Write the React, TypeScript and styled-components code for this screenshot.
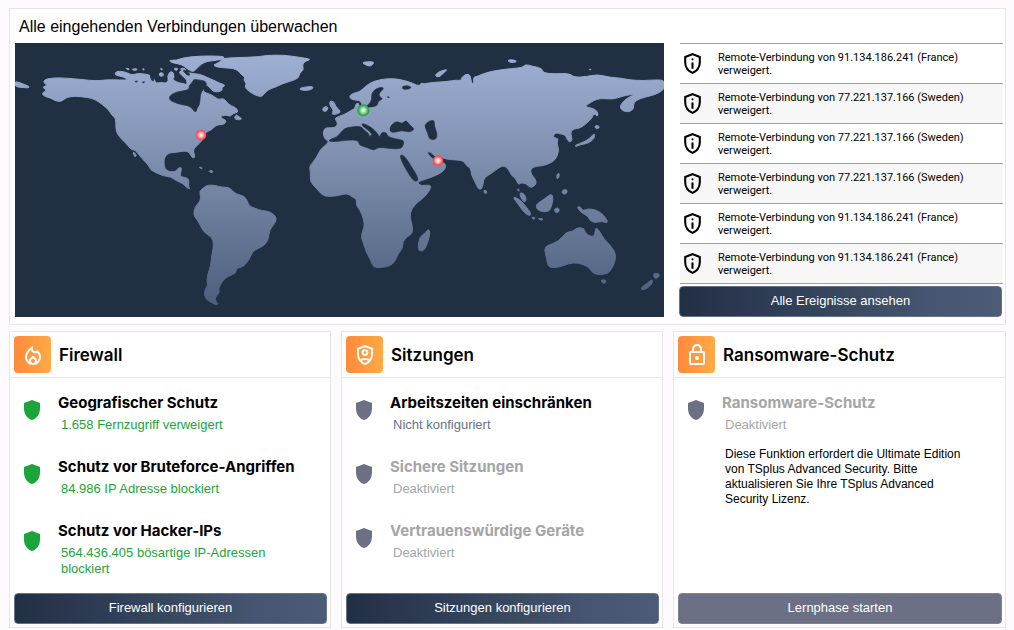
import React from 'react';
import styled, { createGlobalStyle } from 'styled-components';

const GlobalStyle = createGlobalStyle`
  *, *::before, *::after { box-sizing: border-box; }
  body {
    margin: 0;
    background: #fefbff;
    color: #000;
    font-family: "Liberation Sans", Arial, sans-serif;
  }
  h1, h2, h3, p, ul { margin: 0; padding: 0; }
  ul { list-style: none; }
`;

const Page = styled.main`
  display: grid;
  gap: 6px;
  padding: 8px 8px 2px 9px;
`;

const Panel = styled.section`
  background: #fff;
  border: 1px solid #e6e6e8;
`;

const Monitor = styled(Panel)`
  padding: 0 2px 7px 5px;
`;

const MonitorTitle = styled.h1`
  padding: 2px 0 0 4px;
  font-size: 16px;
  font-weight: 400;
  line-height: 32px;
`;

const MonitorBody = styled.div`
  display: grid;
  grid-template-columns: minmax(0, 1fr) 324px;
  align-items: start;
  gap: 15px;
`;

const Map = styled.svg`
  display: block;
  width: 100%;
  background: #212f42;
`;

const EventList = styled.ul`
  margin-left: 1px;
  border-top: 1px solid #a0a0a0;
`;

const EventRow = styled.li`
  display: flex;
  align-items: center;
  height: 40px;
  border-bottom: 1px solid #a0a0a0;
  background: #fff;
  &:nth-child(even) { background: #f7f7f7; }
`;

const EventText = styled.p`
  padding-left: 13px;
  max-width: 270px;
  font-family: Roboto, "Liberation Sans", sans-serif;
  font-size: 11px;
  line-height: 13px;
`;

const ActionButton = styled.button<{ $muted?: boolean }>`
  height: 31px;
  border: 1px solid ${p => (p.$muted ? '#7d8296' : '#66748a')};
  border-radius: 4px;
  background: ${p =>
    p.$muted
      ? '#6b7084'
      : 'linear-gradient(90deg, #203044 0%, #2a354e 14%, #304058 34%, #3c4c62 58%, #455470 76%, #4c5c76 100%)'};
  color: #fff;
  font-family: inherit;
  font-size: 13px;
  line-height: 16px;
  padding: 0 0 2px;
  cursor: pointer;
`;

const EventColumn = styled.div`
  display: flex;
  flex-direction: column;
  ${ActionButton} { margin: 2px 1px 0 0; }
`;

const Cards = styled.div`
  display: grid;
  grid-template-columns: 322fr 322fr 333fr;
  gap: 10px;
`;

const Card = styled(Panel)`
  display: flex;
  flex-direction: column;
  ${ActionButton} { margin: auto 3px 3px 4px; }
`;

const CardHeader = styled.header`
  display: flex;
  align-items: center;
  gap: 8px;
  height: 46px;
  padding-left: 4px;
  border-bottom: 1px solid #e6e6e8;
`;

const Tile = styled.span`
  display: grid;
  place-items: center;
  width: 37px;
  height: 37px;
  border-radius: 4px;
  background: linear-gradient(90deg, #ff8a3c, #ffab45);
  color: #fff;
`;

const CardTitle = styled.h2`
  font-family: Inter, "Liberation Sans", sans-serif;
  font-size: 17px;
  font-weight: 600;
  line-height: 20px;
`;

const FeatureList = styled.ul`
  display: grid;
  gap: 14px;
  padding: 15px 10px 16px;
`;

const Feature = styled.li`
  display: flex;
  align-items: center;
  gap: 14px;
`;

const FeatureIcon = styled.span<{ $active?: boolean }>`
  flex: none;
  padding-bottom: 16px;
  color: ${p => (p.$active ? '#1ba43a' : '#6b7084')};
`;

const FeatureTitle = styled.h3<{ $off?: boolean }>`
  font-family: Inter, "Liberation Sans", sans-serif;
  font-size: 15px;
  font-weight: 700;
  line-height: 20px;
  color: ${p => (p.$off ? '#a5a5a5' : '#000')};
`;

const tones = { green: '#1ba43a', slate: '#6b7084', grey: '#a5a5a5' };
type Tone = keyof typeof tones;

const FeatureStatus = styled.p<{ $tone: Tone }>`
  min-height: 26px;
  margin-top: 4px;
  padding-left: 3px;
  max-width: 240px;
  font-size: 13px;
  line-height: 16px;
  color: ${p => tones[p.$tone]};
`;

const Notice = styled.p`
  max-width: 310px;
  padding: 4px 10px 0 51px;
  margin-top: -16px;
  font-size: 12px;
  line-height: 15px;
`;

const Glyph = styled.svg`
  display: block;
  fill: currentColor;
`;

const icons = {
  shield: 'M480-80q-139-35-229.5-159.5T160-516v-244l320-120 320 120v244q0 152-90.5 276.5T480-80Z',
  info: 'M440-280h80v-240h-80v240Zm40-320q17 0 28.5-11.5T520-640q0-17-11.5-28.5T480-680q-17 0-28.5 11.5T440-640q0 17 11.5 28.5T480-600Zm0 520q-139-35-229.5-159.5T160-516v-244l320-120 320 120v244q0 152-90.5 276.5T480-80Zm0-84q104-33 172-132t68-220v-189l-240-90-240 90v189q0 121 68 220t172 132Z',
  fire: 'M240-400q0 52 21 98.5t60 81.5q-1-5-1-9v-9q0-32 12-60t35-51l113-111 113 111q23 23 35 51t12 60v9q0 4-1 9 39-35 60-81.5t21-98.5q0-50-18.5-94.5T648-574q-20 13-42 19.5t-45 6.5q-62 0-107.5-41T401-690q-39 33-69 68.5t-50.5 72Q261-513 250.5-475T240-400Zm240 52-57 56q-11 11-17 25t-6 29q0 32 23.5 55t56.5 23q33 0 56.5-23t23.5-55q0-16-6-29.5T537-292l-57-56Zm0-492v132q0 34 23.5 57t57.5 23q18 0 33.5-7.5T622-658l18-22q74 42 117 117t43 163q0 134-93 227T480-80q-134 0-227-93t-93-227q0-129 86.5-245T480-840Z',
  person: 'M480-440q58 0 99-41t41-99q0-58-41-99t-99-41q-58 0-99 41t-41 99q0 58 41 99t99 41Zm0-80q-25 0-42.5-17.5T420-580q0-25 17.5-42.5T480-640q25 0 42.5 17.5T540-580q0 25-17.5 42.5T480-520Zm0 440q-139-35-229.5-159.5T160-516v-244l320-120 320 120v244q0 152-90.5 276.5T480-80Zm0-400Zm0-315-240 90v189q0 54 15 105t41 96q42-21 88-33t96-12q50 0 96 12t88 33q26-45 41-96t15-105v-189l-240-90Zm0 515q-36 0-70 8t-65 22q29 30 63 52t72 34q38-12 72-34t63-52q-31-14-65-22t-70-8Z',
  lock: 'M240-80q-33 0-56.5-23.5T160-160v-400q0-33 23.5-56.5T240-640h40v-80q0-83 58.5-141.5T480-920q83 0 141.5 58.5T680-720v80h40q33 0 56.5 23.5T800-560v400q0 33-23.5 56.5T720-80H240Zm0-80h480v-400H240v400Zm240-120q33 0 56.5-23.5T560-360q0-33-23.5-56.5T480-440q-33 0-56.5 23.5T400-360q0 33 23.5 56.5T480-280ZM360-640h240v-80q0-50-35-85t-85-35q-50 0-85 35t-35 85v80Z',
};

function Icon({ name, size = 24 }: { name: keyof typeof icons; size?: number }) {
  return (
    <Glyph width={size} height={size} viewBox="0 -960 960 960" aria-hidden="true">
      <path d={icons[name]} />
    </Glyph>
  );
}

const land = [
  // North America
  '125,262 144,256 130,248 134,239 150,235 180,233 240,238 290,243 320,239 360,240 386,240 370,230 346,226 345,218 356,213 380,217 396,226 412,220 436,222 452,226 464,240 468,250 484,247 498,250 506,242 502,228 512,212 524,222 520,236 536,246 552,250 560,256 562,240 545,226 536,215 550,210 566,220 600,222 625,234 640,240 655,248 678,256 664,263 668,270 656,276 640,275 628,262 618,252 606,272 620,280 635,284 655,300 667,295 676,300 686,314 702,320 712,328 714,337 700,340 690,350 680,345 664,347 662,352 672,358 680,364 670,374 656,374 646,378 634,390 618,396 612,410 606,422 590,438 580,448 582,460 585,472 578,475 570,462 565,455 550,453 530,457 510,458 498,465 492,478 492,500 500,512 515,516 528,514 534,504 545,502 543,515 540,528 550,532 564,534 567,545 565,560 571,568 560,563 548,550 530,543 512,530 490,528 468,518 452,510 445,495 430,480 415,462 405,450 398,450 390,445 380,432 365,418 352,402 347,385 348,355 335,345 325,328 305,312 285,298 262,292 225,288 200,292 190,300 180,305 165,302 150,293 135,290 124,280 142,270',
  '399,454 405,460 410,468 403,471',
  '703,352 710,343 716,350 727,356 718,360 706,358',
  // Arctic islands, Greenland and Iceland
  '505,181 530,181 550,173 600,168 650,168 672,170 672,176 650,181 620,184 604,192 590,206 578,217 560,205 545,193 518,189',
  '664,176 700,173 770,171 800,166 850,165 900,172 935,178 914,184 907,195 911,210 898,220 896,235 870,244 845,252 825,262 806,268 792,282 784,291 765,285 748,275 734,262 740,250 730,240 736,232 722,222 714,212 700,205 680,204 650,201 638,195 662,186',
  '376,204 390,207 384,210', '396,207 412,206 410,211 398,210', '427,206 434,207 430,211',
  '476,220 488,217 492,227 480,230', '480,205 488,206 485,211', '520,204 536,205 528,213', '540,205 556,205 558,213 546,212',
  '44,244 60,248 76,255 88,259 86,264 72,263 44,260',
  '898,265 915,261 938,259 940,266 920,272 903,270',
  '596,501 607,503 605,507', '627,512 639,512 638,518 628,516',
  // South America
  '598,573 615,560 625,555 645,556 665,562 685,561 698,573 710,583 730,587 740,598 747,618 765,625 785,632 805,634 820,642 830,655 825,670 808,690 806,715 795,735 775,745 757,755 750,775 735,795 722,803 708,805 708,820 685,828 668,842 660,858 655,868 660,875 645,893 648,905 655,912 648,915 635,908 620,900 613,885 615,868 624,855 620,845 624,820 632,798 635,765 640,745 640,720 630,708 612,697 600,675 592,660 580,645 585,620 600,605 602,590',
  // Europe, Asia and Africa
  '988,424 972,416 970,395 975,383 995,384 1012,380 1012,365 1003,355 1020,348 1040,340 1055,330 1065,326 1067,311 1077,309 1076,320 1087,318 1083,303 1068,300 1052,298 1048,286 1065,278 1080,275 1095,260 1120,243 1165,235 1200,238 1235,248 1250,256 1262,256 1263,248 1272,252 1290,248 1320,246 1345,244 1370,240 1384,242 1385,232 1398,222 1411,224 1414,250 1422,250 1420,231 1430,230 1440,225 1470,215 1500,210 1530,206 1568,203 1576,193 1595,198 1627,205 1628,218 1660,222 1708,220 1722,232 1760,230 1790,223 1830,232 1860,234 1890,240 1930,242 1975,239 1994,242 1994,266 1975,280 1950,288 1920,295 1900,308 1902,325 1890,335 1875,335 1862,328 1861,314 1880,295 1905,283 1890,284 1870,288 1845,296 1830,297 1800,295 1780,302 1765,312 1754,320 1772,323 1792,332 1794,348 1780,340 1778,352 1765,365 1745,382 1730,386 1718,388 1711,400 1718,420 1708,428 1700,415 1695,404 1680,402 1670,398 1660,404 1662,414 1676,416 1670,428 1676,445 1674,462 1665,480 1650,490 1625,498 1600,500 1591,510 1595,525 1605,535 1610,550 1600,560 1590,563 1578,550 1560,548 1556,556 1545,532 1535,528 1528,512 1515,497 1500,500 1475,520 1452,533 1450,550 1445,568 1435,568 1425,545 1414,525 1413,505 1400,498 1390,482 1370,480 1340,478 1325,472 1305,470 1292,455 1280,456 1288,468 1300,478 1312,495 1330,486 1339,497 1330,515 1300,530 1260,543 1252,548 1262,558 1294,554 1290,570 1275,590 1255,605 1235,625 1229,650 1237,675 1238,700 1222,710 1208,724 1208,745 1195,760 1185,785 1170,798 1145,803 1120,803 1112,780 1098,755 1090,728 1082,708 1094,680 1090,655 1080,630 1068,615 1071,598 1055,590 1045,582 1030,582 1010,588 975,590 960,578 950,566 930,545 932,520 928,500 938,488 952,468 960,450 978,434',
  // British Isles, Svalbard, Novaya Zemlya and Severnaya Zemlya
  '968,324 980,318 985,326 978,335 968,333', '988,303 1002,304 1006,318 1018,330 1022,337 1008,343 994,343 1002,332 990,318',
  '1085,188 1100,185 1125,186 1112,199 1102,197', '1304,228 1315,215 1345,207 1330,219 1318,232', '1524,180 1538,179 1552,184 1540,188 1526,186', '1767,207 1774,208 1770,211',
  // Japan and the Philippines
  '1783,379 1792,375 1800,382 1790,388', '1784,398 1784,415 1765,430 1740,434 1726,441 1726,435 1750,427 1770,415', '1790,334 1795,345 1788,350',
  '1670,524 1678,518 1677,533 1671,537', '1686,573 1696,566 1703,574 1697,583 1687,581',
  // Indonesia and New Guinea
  '1536,588 1560,599 1573,614 1594,640 1590,648 1574,640 1557,616', '1558,577 1573,581 1580,600 1572,607 1563,595', '1552,567 1559,569 1555,575',
  '1606,614 1635,596 1654,580 1660,596 1654,620 1646,637 1614,633', '1661,628 1674,622 1680,633 1668,640', '1594,651 1607,653 1600,659', '1612,655 1631,656 1625,662',
  '1730,621 1741,619 1748,634 1762,626 1787,629 1812,645 1826,671 1805,663 1785,669 1769,661 1764,648 1745,639',
  // Australia, Tasmania and New Zealand
  '1632,745 1645,735 1675,725 1700,695 1718,695 1730,683 1753,684 1755,700 1778,712 1785,702 1787,680 1802,698 1810,715 1835,740 1849,765 1842,795 1825,822 1790,825 1775,815 1765,800 1735,788 1705,790 1685,800 1645,805 1640,775',
  '1802,840 1817,839 1818,848 1808,851', '1961,820 1975,820 1980,827 1969,837 1961,831', '1922,864 1939,852 1956,838 1959,846 1945,864 1927,870',
  // Madagascar and Sri Lanka
  '1285,686 1291,698 1284,725 1274,750 1262,754 1253,746 1259,710 1274,701', '1451,570 1460,572 1460,581 1453,580',
];

const water = [
  // Hudson Bay and the inlets around it
  '507,292 515,283 530,276 548,273 568,268 566,258 578,246 580,238 600,240 618,244 620,258 608,270 602,280 600,300 598,316 591,324 589,336 582,334 574,322 560,316 545,314 525,308 510,301',
  '520,222 532,222 545,232 558,242 552,249 532,245 518,236 528,232', '546,208 562,214 572,226 560,226',
  '402,244 415,243 410,247', '426,246 436,245 430,249', '448,226 460,220 462,238 458,246',
  // Baltic, White Sea, Mediterranean, Black Sea, Caspian and Red Sea
  '1106,322 1096,320 1108,312 1116,298 1114,280 1128,266 1146,261 1152,266 1136,280 1138,290 1150,296 1134,304 1132,318', '1206,260 1220,256 1236,262 1225,268 1208,268', '1160,291 1168,290 1168,294',
  '985,424 992,417 1010,412 1022,398 1034,385 1050,382 1068,379 1084,380 1094,392 1106,400 1108,411 1118,403 1104,390 1086,377 1086,370 1102,375 1120,387 1132,400 1140,413 1144,396 1160,398 1163,410 1185,417 1212,420 1210,435 1203,447 1165,445 1135,441 1122,452 1100,442 1078,436 1075,420 1040,420 1010,425',
  '1168,394 1173,374 1192,363 1206,372 1218,360 1228,374 1245,388 1228,397 1205,391 1182,398', '1272,376 1287,363 1304,360 1302,378 1312,400 1309,419 1287,418 1284,400',
  '1200,463 1215,469 1237,505 1252,528 1254,545 1239,542 1218,508 1204,482',
];

// Closed curve that runs through the middle of every edge of the outline.
function smooth(outline: string) {
  const pts = outline.split(' ').map(p => p.split(',').map(Number));
  const mid = (a: number[], b: number[]) => `${(a[0] + b[0]) / 2},${(a[1] + b[1]) / 2}`;
  const last = pts[pts.length - 1];
  return (
    `M${mid(last, pts[0])}` +
    pts.map((p, i) => `Q${p[0]},${p[1]} ${mid(p, pts[(i + 1) % pts.length])}`).join('') +
    'Z'
  );
}

const markers = [
  { x: 603, y: 405, r: 16, kind: 'red' },
  { x: 1090, y: 331, r: 18, kind: 'green' },
  { x: 1314, y: 482, r: 16, kind: 'red' },
];

function WorldMap() {
  return (
    <Map viewBox="45 129 1947 822" role="img" aria-label="Weltkarte der eingehenden Verbindungen">
      <defs>
        <linearGradient id="land" gradientUnits="userSpaceOnUse" x1="0" y1="165" x2="0" y2="920">
          <stop offset="0" stopColor="#9dafd3" />
          <stop offset="0.35" stopColor="#8494b4" />
          <stop offset="0.6" stopColor="#6f7f9e" />
          <stop offset="1" stopColor="#4d5f7c" />
        </linearGradient>
        <radialGradient id="red">
          <stop offset="0" stopColor="#ffffff" />
          <stop offset="0.35" stopColor="#ffc4c6" />
          <stop offset="0.8" stopColor="#ff5257" />
          <stop offset="1" stopColor="#f6464c" />
        </radialGradient>
        <radialGradient id="green">
          <stop offset="0" stopColor="#ffffff" />
          <stop offset="0.35" stopColor="#b4e2bd" />
          <stop offset="0.8" stopColor="#2fae4a" />
          <stop offset="1" stopColor="#1ea03b" />
        </radialGradient>
      </defs>
      {land.map(outline => (
        <path key={outline} d={smooth(outline)} fill="url(#land)" stroke="url(#land)" strokeWidth="3" />
      ))}
      {water.map(outline => (
        <path key={outline} d={smooth(outline)} fill="#212f42" stroke="#212f42" strokeWidth="2" />
      ))}
      {markers.map(m => (
        <circle key={m.x} cx={m.x} cy={m.y} r={m.r} fill={`url(#${m.kind})`} />
      ))}
    </Map>
  );
}

const events = [
  '91.134.186.241 (France)',
  '77.221.137.166 (Sweden)',
  '77.221.137.166 (Sweden)',
  '77.221.137.166 (Sweden)',
  '91.134.186.241 (France)',
  '91.134.186.241 (France)',
];

const EventIcon = styled.span`
  flex: none;
`;

interface FeatureData {
  title: string;
  status: string;
  tone: Tone;
}

interface CardData {
  title: string;
  icon: keyof typeof icons;
  features: FeatureData[];
  notice?: string;
  action: string;
  muted?: boolean;
}

const cards: CardData[] = [
  {
    title: 'Firewall',
    icon: 'fire',
    features: [
      { title: 'Geografischer Schutz', status: '1.658 Fernzugriff verweigert', tone: 'green' },
      { title: 'Schutz vor Bruteforce-Angriffen', status: '84.986 IP Adresse blockiert', tone: 'green' },
      { title: 'Schutz vor Hacker-IPs', status: '564.436.405 bösartige IP-Adressen blockiert', tone: 'green' },
    ],
    action: 'Firewall konfigurieren',
  },
  {
    title: 'Sitzungen',
    icon: 'person',
    features: [
      { title: 'Arbeitszeiten einschränken', status: 'Nicht konfiguriert', tone: 'slate' },
      { title: 'Sichere Sitzungen', status: 'Deaktiviert', tone: 'grey' },
      { title: 'Vertrauenswürdige Geräte', status: 'Deaktiviert', tone: 'grey' },
    ],
    action: 'Sitzungen konfigurieren',
  },
  {
    title: 'Ransomware-Schutz',
    icon: 'lock',
    features: [{ title: 'Ransomware-Schutz', status: 'Deaktiviert', tone: 'grey' }],
    notice:
      'Diese Funktion erfordert die Ultimate Edition von TSplus Advanced Security. Bitte aktualisieren Sie Ihre TSplus Advanced Security Lizenz.',
    action: 'Lernphase starten',
    muted: true,
  },
];

export default function App() {
  return (
    <>
      <GlobalStyle />
      <Page>
        <Monitor>
          <MonitorTitle>Alle eingehenden Verbindungen überwachen</MonitorTitle>
          <MonitorBody>
            <WorldMap />
            <EventColumn>
              <EventList>
                {events.map((source, i) => (
                  <EventRow key={i}>
                    <EventIcon><Icon name="info" size={25} /></EventIcon>
                    <EventText>Remote-Verbindung von {source} verweigert.</EventText>
                  </EventRow>
                ))}
              </EventList>
              <ActionButton type="button">Alle Ereignisse ansehen</ActionButton>
            </EventColumn>
          </MonitorBody>
        </Monitor>
        <Cards>
          {cards.map(card => (
            <Card key={card.title}>
              <CardHeader>
                <Tile><Icon name={card.icon} /></Tile>
                <CardTitle>{card.title}</CardTitle>
              </CardHeader>
              <FeatureList>
                {card.features.map(f => (
                  <Feature key={f.title}>
                    <FeatureIcon $active={f.tone === 'green'}><Icon name="shield" /></FeatureIcon>
                    <div>
                      <FeatureTitle $off={f.tone === 'grey'}>{f.title}</FeatureTitle>
                      <FeatureStatus $tone={f.tone}>{f.status}</FeatureStatus>
                    </div>
                  </Feature>
                ))}
              </FeatureList>
              {card.notice && <Notice>{card.notice}</Notice>}
              <ActionButton type="button" $muted={card.muted}>{card.action}</ActionButton>
            </Card>
          ))}
        </Cards>
      </Page>
    </>
  );
}
